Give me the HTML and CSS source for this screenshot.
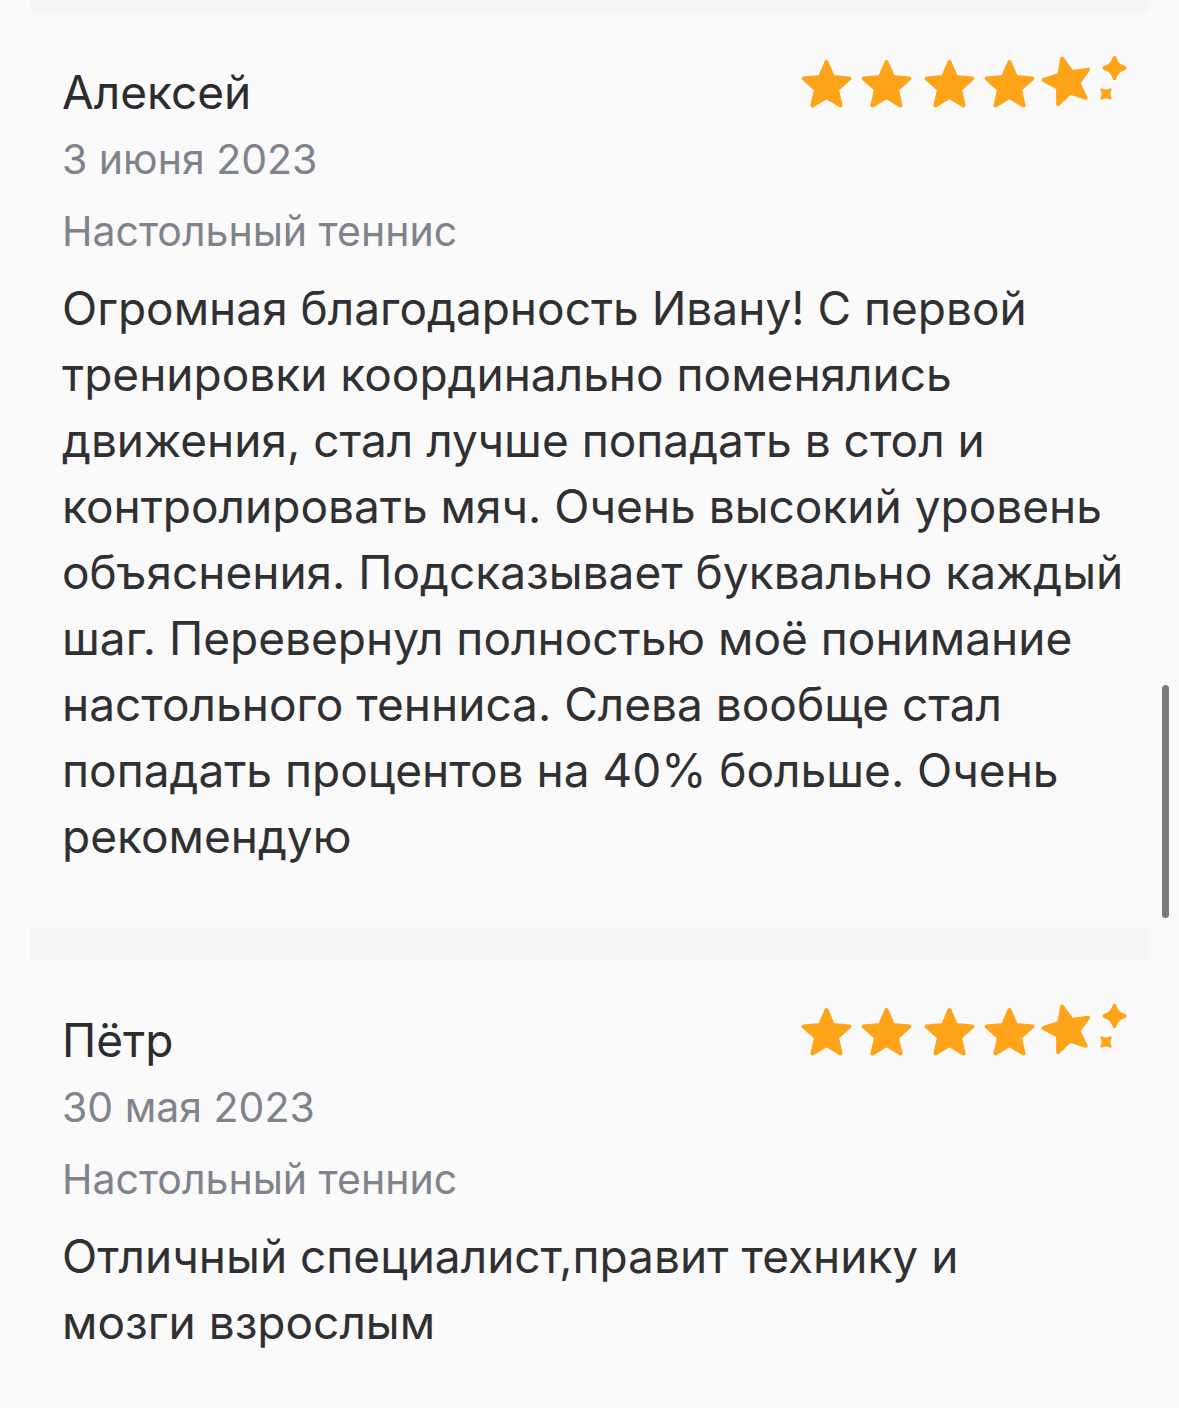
FILE: index.html
```html
<!DOCTYPE html>
<html lang="ru">
<head>
<meta charset="utf-8">
<title>Отзывы</title>
<link rel="stylesheet" href="styles.css">
</head>
<body>
<svg class="defs" width="0" height="0" aria-hidden="true">
  <defs>
    <polygon id="star" points="0,-24 6.47,-8.9 22.83,-7.42 10.46,3.4 14.11,19.42 0,11 -14.11,19.42 -10.46,3.4 -22.83,-7.42 -6.47,-8.9" />
    <path id="spark" d="M0,-10 Q2.2,-2.2 10,0 Q2.2,2.2 0,10 Q-2.2,2.2 -10,0 Q-2.2,-2.2 0,-10Z" />
    <g id="rating">
      <use href="#star" transform="translate(26.5,34)" />
      <use href="#star" transform="translate(86.5,34)" />
      <use href="#star" transform="translate(149.5,34)" />
      <use href="#star" transform="translate(209.5,34)" />
      <use href="#star" transform="translate(267.5,30) rotate(-13)" />
      <use href="#spark" transform="translate(314.5,16)" />
      <use href="#spark" transform="translate(306,42) rotate(45) scale(0.62)" />
    </g>
  </defs>
</svg>
<div class="page">
  <div class="band band-top"></div>

  <article class="review">
    <div class="review-head">
      <div class="meta">
        <div class="name">Алексей</div>
        <div class="date">3 июня 2023</div>
        <div class="category">Настольный теннис</div>
      </div>
      <svg class="stars" width="330" height="60" viewBox="0 0 330 60" aria-label="Оценка 5">
        <use href="#rating" />
      </svg>
    </div>
    <p class="text">Огромная благодарность Ивану! С первой тренировки координально поменялись движения, стал лучше попадать в стол и контролировать мяч. Очень высокий уровень объяснения. Подсказывает буквально каждый шаг. Перевернул полностью моё понимание настольного тенниса. Слева вообще стал попадать процентов на 40% больше. Очень рекомендую</p>
  </article>

  <div class="band band-sep"></div>

  <article class="review">
    <div class="review-head">
      <div class="meta">
        <div class="name">Пётр</div>
        <div class="date">30 мая 2023</div>
        <div class="category">Настольный теннис</div>
      </div>
      <svg class="stars" width="330" height="60" viewBox="0 0 330 60" aria-label="Оценка 5">
        <use href="#rating" />
      </svg>
    </div>
    <p class="text">Отличный специалист,правит технику и<br>мозги взрослым</p>
  </article>

  <div class="scrollbar"></div>
</div>
</body>
</html>
```

FILE: styles.css
```css
html, body {
  margin: 0;
  padding: 0;
  background: #fafafa;
}

body {
  font-family: Inter, "Noto Sans", "Liberation Sans", sans-serif;
  color: #2e2e30;
}

.defs {
  position: absolute;
  width: 0;
  height: 0;
}

.page {
  position: relative;
  width: 1179px;
  height: 1408px;
  overflow: hidden;
}

.band {
  background: #f5f6f8;
  margin: 0 30px;
}

.band-top {
  height: 12px;
}

.band-sep {
  height: 31px;
}

.review {
  padding: 50px 49px 60px 62px;
}

.review-head {
  display: flex;
  justify-content: space-between;
  align-items: flex-start;
}

.meta {
  display: flex;
  flex-direction: column;
}

.name {
  font-size: 46px;
  line-height: 60px;
  color: #2c2c2e;
}

.date {
  margin-top: 2px;
  font-size: 41px;
  line-height: 70px;
  color: #80838c;
}

.category {
  margin-top: 2px;
  font-size: 41px;
  line-height: 70px;
  color: #80838c;
}

.stars {
  display: block;
  margin-top: -10px;
  fill: #ffa419;
  stroke: #ffa419;
  stroke-width: 4;
  stroke-linejoin: round;
}

.stars use[href="#spark"] {
  stroke-width: 2;
}

.text {
  margin: 9px 0 0;
  font-size: 46px;
  line-height: 66px;
  color: #303032;
}

.scrollbar {
  position: absolute;
  left: 1162px;
  top: 685px;
  width: 7px;
  height: 233px;
  border-radius: 4px;
  background: #7b7b7b;
}
```
